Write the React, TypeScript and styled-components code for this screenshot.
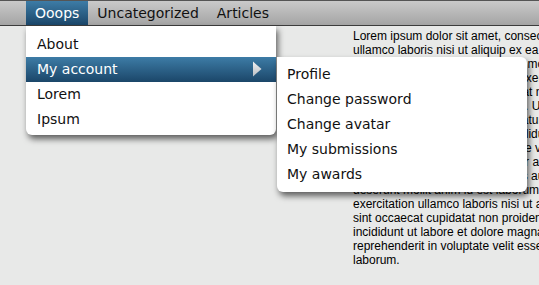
import React from "react";
import styled, { createGlobalStyle, css } from "styled-components";

const GlobalStyle = createGlobalStyle`
  html, body {
    margin: 0;
    padding: 0;
    background: #e8e9e8;
    overflow: hidden;
  }
  body {
    font-family: "DejaVu Sans", Verdana, sans-serif;
  }
`;

const Page = styled.div`
  display: flex;
  flex-direction: column;
  width: 539px;
  height: 285px;
  overflow: hidden;
`;

const NavBar = styled.nav`
  display: flex;
  align-items: stretch;
  height: 24px;
  padding-left: 26px;
  border-top: 1px solid #555;
  border-bottom: 1px solid #3c3c3c;
  background: linear-gradient(#cacaca, #a4a4a4);
  position: relative;
  z-index: 2;
`;

const blueGradient = css`
  background: linear-gradient(#3d7ca6, #1b4669);
`;

const Tab = styled.div<{ $active?: boolean }>`
  position: relative;
  padding: 0 9px;
  line-height: 24px;
  font-size: 14px;
  color: #111;
  cursor: default;
  ${(p) =>
    p.$active &&
    css`
      ${blueGradient};
      color: #fff;
    `}
`;

const menuShadow = css`
  box-shadow: 2px 4px 6px rgba(0, 0, 0, 0.6);
`;

const Dropdown = styled.div`
  position: absolute;
  top: calc(100% + 1px);
  left: 0;
  width: 250px;
  padding: 6px 0 3px;
  background: #fff;
  border-radius: 0 0 6px 6px;
  ${menuShadow};
  display: flex;
  flex-direction: column;
`;

const SubMenu = styled.div`
  position: absolute;
  top: 0;
  left: calc(100% + 1px);
  width: 250px;
  padding: 5px 0;
  background: #fff;
  border-radius: 0 6px 6px 6px;
  ${menuShadow};
  display: flex;
  flex-direction: column;
`;

const MenuItem = styled.div<{ $active?: boolean; $indent?: number }>`
  position: relative;
  height: 25px;
  line-height: 25px;
  padding-left: ${(p) => p.$indent ?? 11}px;
  font-size: 14px;
  color: #111;
  white-space: nowrap;
  ${(p) =>
    p.$active &&
    css`
      ${blueGradient};
      color: #fff;
    `}
`;

const Arrow = styled.svg`
  position: absolute;
  right: 14px;
  top: 4px;
`;

const Content = styled.main`
  flex: 1;
  padding: 3px 0 0 353px;
  position: relative;
  z-index: 1;
`;

const BodyText = styled.p`
  margin: 0;
  font-family: "Liberation Sans", Arial, sans-serif;
  font-size: 12px;
  line-height: 14px;
  color: #000;
`;

const TextLine = styled.span`
  display: block;
  white-space: nowrap;
`;

const LOREM =
  "Lorem ipsum dolor sit amet, consectetur adipisicing elit, sed do eiusmod tempor incididunt ut labore et dolore magna aliqua. Ut enim ad minim veniam, quis nostrud exercitation ullamco laboris nisi ut aliquip ex ea commodo consequat. Duis aute irure dolor in reprehenderit in voluptate velit esse cillum dolore eu fugiat nulla pariatur. Excepteur sint occaecat cupidatat non proident, sunt in culpa qui officia deserunt mollit anim id est laborum.";

// The seven repeated paragraphs, wrapped the way the original page wraps them.
const WORDS = Array(7).fill(LOREM).join(" ").split(" ");

function splitEven(words: string[], count: number): string[] {
  const total = words.join(" ").length;
  const lines: string[] = [];
  let cur: string[] = [];
  let used = 0;
  words.forEach((w, i) => {
    cur.push(w);
    used += w.length + 1;
    const target = (total * (lines.length + 1)) / count;
    if (used >= target && lines.length < count - 1 && i < words.length - 1) {
      lines.push(cur.join(" "));
      cur = [];
    }
  });
  if (cur.length) lines.push(cur.join(" "));
  return lines;
}

const P = 69;
const anchors = [0, 27];
const tailAnchors = [5 * P + 26, 5 * P + 53, 6 * P + 12, 6 * P + 41, 6 * P + 68, 7 * P];

const LINES: string[] = [
  WORDS.slice(anchors[0], anchors[1]).join(" "),
  ...splitEven(WORDS.slice(anchors[1], tailAnchors[0]), 11),
  ...tailAnchors.slice(0, -1).map((a, i) => WORDS.slice(a, tailAnchors[i + 1]).join(" ")),
];

const mainItems = ["About", "My account", "Lorem", "Ipsum"];
const subItems = ["Profile", "Change password", "Change avatar", "My submissions", "My awards"];

export default function App() {
  return (
    <>
      <GlobalStyle />
      <Page>
        <NavBar>
          <Tab $active>
            Ooops
            <Dropdown>
              {mainItems.map((label) =>
                label === "My account" ? (
                  <MenuItem key={label} $active>
                    {label}
                    <Arrow width="10" height="16" viewBox="0 0 10 16">
                      <defs>
                        <linearGradient id="arr" x1="0" y1="0" x2="0" y2="1">
                          <stop offset="0" stopColor="#f2f2f2" />
                          <stop offset="1" stopColor="#b9bec4" />
                        </linearGradient>
                      </defs>
                      <polygon points="1,0.5 9.5,8 1,15.5" fill="url(#arr)" />
                    </Arrow>
                    <SubMenu>
                      {subItems.map((s) => (
                        <MenuItem key={s} $indent={10}>
                          {s}
                        </MenuItem>
                      ))}
                    </SubMenu>
                  </MenuItem>
                ) : (
                  <MenuItem key={label}>{label}</MenuItem>
                )
              )}
            </Dropdown>
          </Tab>
          <Tab>Uncategorized</Tab>
          <Tab>Articles</Tab>
        </NavBar>
        <Content>
          <BodyText>
            {LINES.map((l, i) => (
              <TextLine key={i}>{l}</TextLine>
            ))}
          </BodyText>
        </Content>
      </Page>
    </>
  );
}
